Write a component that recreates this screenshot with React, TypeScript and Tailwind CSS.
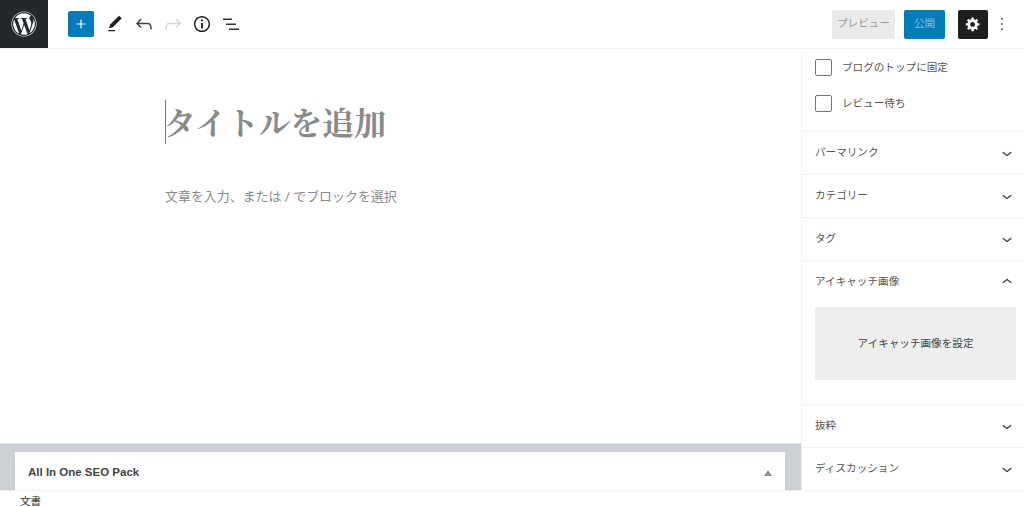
import { FaWordpress } from 'react-icons/fa';

const sans = "font-['Roboto','Noto_Sans_CJK_JP',sans-serif]";

const Icon = ({ d, size = 24, className = '' }: { d: string; size?: number; className?: string }) => (
  <svg viewBox="0 0 24 24" width={size} height={size} fill="currentColor" className={className}>
    <path d={d} />
  </svg>
);

const chevronDown = 'M17.5 11.6L12 16l-5.5-4.4.9-1.2L12 14l4.5-3.6 1 1.2z';
const chevronUp = 'M6.5 12.4L12 8l5.5 4.4-.9 1.2L12 10l-4.5 3.6-1-1.2z';

const PanelRow = ({ label }: { label: string }) => (
  <div className="h-[43px] shrink-0 flex items-center justify-between pl-[13px] pr-[7px] border-b border-[#f0f0f0] text-[10.6px] text-[#555]">
    <span>{label}</span>
    <Icon d={chevronDown} size={20} className="text-[#333] -mt-[1px]" />
  </div>
);

const CheckRow = ({ label }: { label: string }) => (
  <div className="flex items-center h-[36px] gap-[10px] text-[10.6px] text-[#555]">
    <span className="w-[17px] h-[17px] rounded-[2px] border border-[#757575] bg-white" />
    <span className="pt-[2px]">{label}</span>
  </div>
);

export default function App() {
  return (
    <div className={`w-[1024px] h-[507px] bg-white flex flex-col overflow-hidden ${sans}`}>
      {/* Top toolbar */}
      <header className="h-[49px] shrink-0 flex items-center border-b border-[#f0f0f0]">
        <div className="w-[48px] h-[48px] bg-[#23282d] flex items-center justify-center text-white">
          <FaWordpress size={26} className="-ml-[1px]" />
        </div>
        <div className="flex items-center ml-[20px]">
          <button className="w-[26px] h-[26px] rounded-[2px] bg-[#007cba] text-white flex items-center justify-center">
            <svg viewBox="0 0 24 24" width="18" height="18" fill="currentColor">
              <path d="M18 11.2h-5.2V6h-1.6v5.2H6v1.6h5.2V18h1.6v-5.2H18z" />
            </svg>
          </button>
          <Icon d="M20.1 5.1L16.9 2 6.2 12.7l-1.3 4.4 4.5-1.3L20.1 5.1zM4 20.8h8v-1.5H4v1.5z" size={20} className="text-[#1e1e1e] ml-[11px]" />
          <Icon d="M18.3 11.7c-.6-.6-1.4-.9-2.3-.9H6.7l2.9-3.3-1.1-1-4.5 5L8.5 16l1-1-2.7-2.7H16c.5 0 .9.2 1.3.5 1 1 1 3.4 1 4.5v.3h1.5v-.2c0-1.5 0-4.3-1.5-5.7z" className="text-[#444] ml-[7px]" />
          <Icon d="M15.6 6.5l-1.1 1 2.9 3.3H8c-.9 0-1.7.3-2.3.9-1.4 1.5-1.4 4.2-1.4 5.6v.2h1.5v-.3c0-1.1 0-3.5 1-4.5.3-.3.7-.5 1.3-.5h9.2L14.5 15l1.1 1.1 4.6-4.6-4.6-5z" className="text-[#d5d8da] ml-[5px]" />
          <Icon d="M12 3.2c-4.8 0-8.8 3.9-8.8 8.8 0 4.8 3.9 8.8 8.8 8.8 4.8 0 8.8-3.9 8.8-8.8 0-4.8-4-8.8-8.8-8.8zm0 16c-4 0-7.2-3.3-7.2-7.2C4.8 8 8 4.8 12 4.8s7.2 3.3 7.2 7.2c0 4-3.2 7.2-7.2 7.2zM11 17h2v-6h-2v6zm0-8h2V7h-2v2z" size={22} className="text-[#1e1e1e] ml-[6px]" />
          <Icon d="M3 6.4h9v1.5H3zM6 11.4h10v1.5H6zM9 16.4h10v1.5H9z" className="text-[#333] ml-[7px]" />
        </div>
        <div className="ml-auto flex items-center pr-[8px]">
          <div className="w-[63px] h-[29px] rounded-[2px] bg-[#eaeaea] text-[#9a9a9a] text-[10.6px] flex items-center justify-center">プレビュー</div>
          <div className="w-[41px] h-[29px] rounded-[2px] bg-[#007cba] text-[#8cc1de] text-[10.6px] flex items-center justify-center ml-[9px]">公開</div>
          <div className="w-[30px] h-[29px] rounded-[2px] bg-[#1e1e1e] text-white flex items-center justify-center ml-[13px]">
            <svg viewBox="0 0 20 20" width="16" height="16" fill="currentColor">
              <path fillRule="evenodd" d="M18 12h-2.18c-.17.7-.44 1.35-.81 1.93l1.54 1.54-2.1 2.1-1.54-1.54c-.58.36-1.23.63-1.91.79V19H8v-2.18c-.68-.16-1.33-.43-1.91-.79l-1.54 1.54-2.12-2.12 1.54-1.54c-.36-.58-.63-1.23-.79-1.91H1V9.03h2.17c.16-.7.44-1.35.8-1.94L2.43 5.55l2.1-2.1 1.54 1.54c.58-.37 1.24-.64 1.93-.81V2h3v2.18c.68.16 1.33.43 1.91.79l1.54-1.54 2.12 2.12-1.54 1.54c.36.59.64 1.24.8 1.94H18V12zm-8.5 1.5c1.66 0 3-1.34 3-3s-1.34-3-3-3-3 1.34-3 3 1.34 3 3 3z" />
            </svg>
          </div>
          <div className="w-[28px] flex items-center justify-center">
            <svg viewBox="0 0 24 24" width="20" height="20" fill="#333">
              <path d="M13 19h-2v-2h2v2zm0-6h-2v-2h2v2zm0-6h-2V5h2v2z" />
            </svg>
          </div>
        </div>
      </header>

      <div className="flex-1 flex min-h-0">
        {/* Editor */}
        <main className="flex-1 flex flex-col min-w-0">
          <div className="flex-1 pl-[165px] pt-[51px]">
            <h1 className="h-[44px] border-l border-[#777] indent-[-2px] font-['Liberation_Serif','Noto_Serif_CJK_JP','Noto_Sans_CJK_JP',serif] font-bold text-[31.8px] leading-[50px] text-[#8a8a8a]">
              タイトルを追加
            </h1>
            <p className="mt-[44px] text-[12.95px] leading-[18px] text-[#8a8a8a]">文章を入力、または / でブロックを選択</p>
          </div>
          <div className="h-[47px] shrink-0 bg-[#ccd0d4] border-t border-[#dfe2e5] pt-[8px] pl-[15px] pr-[16px]">
            <div className="h-[38px] bg-white flex items-center justify-between pt-[4px] pl-[13px] pr-[13px]">
              <span className="font-['Liberation_Sans',sans-serif] font-bold text-[11.5px] text-[#444]">All In One SEO Pack</span>
              <svg viewBox="0 0 8 6" width="8" height="6" fill="#8a8f94"><path d="M4 0l4 6H0z" /></svg>
            </div>
          </div>
        </main>

        {/* Settings sidebar */}
        <aside className="w-[223px] shrink-0 border-l border-[#f0f0f0] flex flex-col overflow-hidden">
          <div className="h-[83px] shrink-0 pl-[13px] border-b border-[#f0f0f0]">
            <CheckRow label="ブログのトップに固定" />
            <CheckRow label="レビュー待ち" />
          </div>
          <PanelRow label="パーマリンク" />
          <PanelRow label="カテゴリー" />
          <PanelRow label="タグ" />
          <div className="h-[144px] shrink-0 border-b border-[#f0f0f0]">
            <div className="h-[42px] mb-[1px] flex items-center justify-between pl-[13px] pr-[7px] text-[10.6px] text-[#555]">
              <span>アイキャッチ画像</span>
              <Icon d={chevronUp} size={20} className="text-[#333]" />
            </div>
            <div className="ml-[13px] mr-[8px] mt-[4px] h-[73px] pt-[1px] bg-[#eeeeee] flex items-center justify-center text-[10.6px] text-[#444]">
              アイキャッチ画像を設定
            </div>
          </div>
          <PanelRow label="抜粋" />
          <PanelRow label="ディスカッション" />
        </aside>
      </div>

      {/* Breadcrumb footer */}
      <footer className="h-[17px] shrink-0 border-t border-[#f0f0f0] pl-[20px] text-[10.6px] leading-[22px] text-[#333]">文書</footer>
    </div>
  );
}
